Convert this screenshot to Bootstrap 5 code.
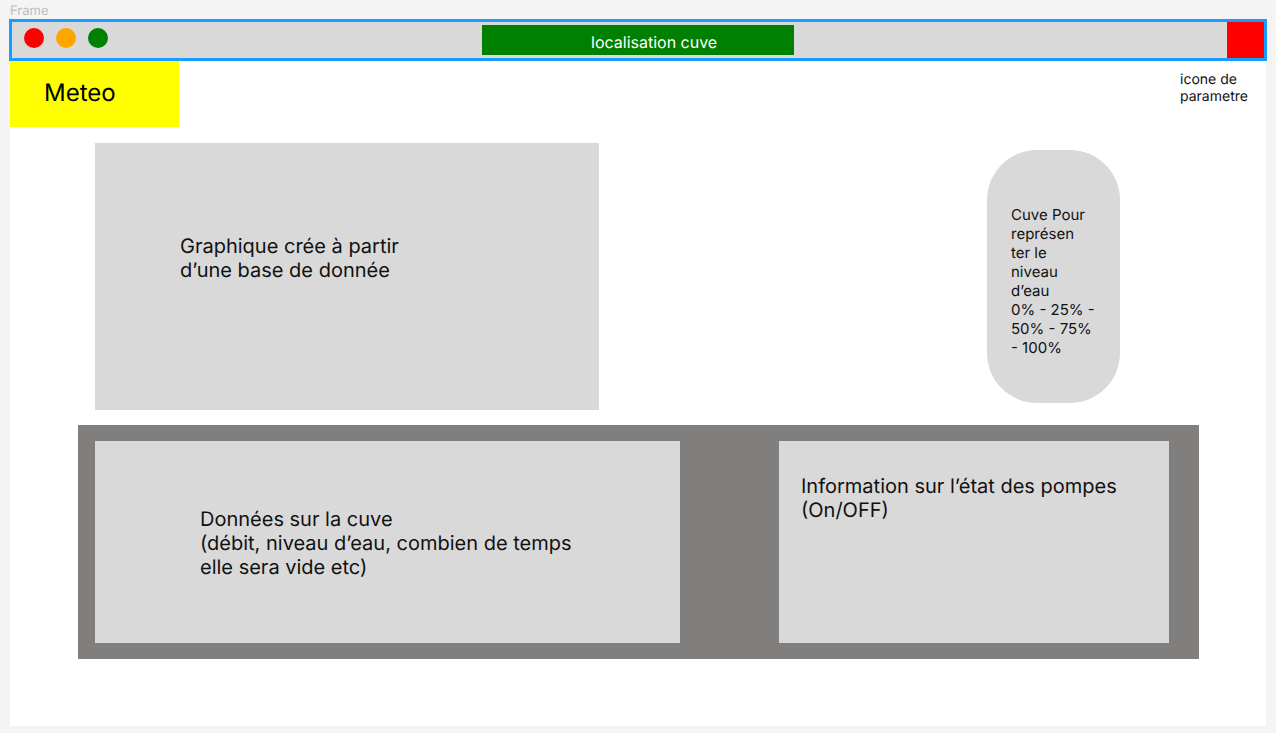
<!DOCTYPE html>
<html lang="fr">
<head>
<meta charset="utf-8">
<meta name="viewport" content="width=device-width, initial-scale=1">
<title>Localisation cuve</title>
<link href="https://cdn.jsdelivr.net/npm/bootstrap@5.3.0/dist/css/bootstrap.min.css" rel="stylesheet">
<style>
  body { font-family: Inter, "Liberation Sans", sans-serif; font-size: 20px; line-height: 24px; color: #111; background: #f4f4f4; text-rendering: geometricPrecision; }
  .board { padding: 3px 9px 7px; }
  .board-name { font-size: 13px; line-height: 16px; color: #bdbdbd; padding-left: 1px; }
  .titlebar { display: grid; grid-template-columns: 470fr 312fr 433fr 37px; height: 42px; background: #d9d9d9; border: 3px solid #189cff; }
  .lights { gap: 12px; padding: 6px 12px; }
  .light { width: 20px; height: 20px; border-radius: 50%; border: 0; padding: 0; }
  .light-close { background: #f00; }
  .light-min { background: orange; }
  .light-max { background: green; }
  .location { background: green; color: #fff; font-size: 16px; line-height: 18px; margin: 3px 0; padding: 8px 0 4px 109px; }
  .settings-block { background: #f00; border: 0; }
  .screen { background: #fff; margin: 0 1px; }
  .weather { background: #ff0; width: 169px; height: 66px; padding: 18px 34px; font-size: 24px; line-height: 28px; font-weight: 400; color: #000; }
  .settings-note { width: 86px; padding-top: 10px; font-size: 14px; line-height: 17px; }
  .charts { display: grid; grid-template-columns: 504fr 388fr 133fr; padding: 16px 146px 15px 85px; }
  .tile { background: #d9d9d9; }
  .chart { height: 267px; padding: 91px 85px; }
  .tank { grid-column: 3; height: 253px; margin-top: 7px; border-radius: 50px; padding: 55px 24px; font-size: 15px; line-height: 19px; }
  .panel { display: grid; grid-template-columns: 585fr 99fr 390fr; background: #817e7e; margin: 0 67px 0 68px; padding: 16px 30px 16px 17px; }
  .figures { height: 202px; padding: 66px 105px; }
  .pumps { grid-column: 3; padding: 33px 22px; }
  .screen-end { height: 67px; }
</style>
</head>
<body>
<div class="board">
  <div class="board-name">Frame</div>
  <header class="titlebar">
    <div class="lights d-flex">
      <button class="light light-close" type="button" aria-label="Fermer"></button>
      <button class="light light-min" type="button" aria-label="Réduire"></button>
      <button class="light light-max" type="button" aria-label="Agrandir"></button>
    </div>
    <div class="location text-nowrap">localisation cuve</div>
    <div></div>
    <button class="settings-block" type="button" aria-label="Paramètres"></button>
  </header>
  <main class="screen">
    <div class="d-flex justify-content-between">
      <h1 class="weather mb-0">Meteo</h1>
      <p class="settings-note mb-0">icone de<br>parametre</p>
    </div>
    <section class="charts">
      <div class="tile chart"><p class="mb-0">Graphique crée à partir<br>d’une base de donnée</p></div>
      <div class="tile tank"><p class="mb-0 text-nowrap">Cuve Pour<br>représen<br>ter le<br>niveau<br>d’eau<br>0% - 25% -<br>50% - 75%<br>- 100%</p></div>
    </section>
    <section class="panel">
      <div class="tile figures"><p class="mb-0 text-nowrap">Données sur la cuve<br>(débit, niveau d’eau, combien de temps<br>elle sera vide etc)</p></div>
      <div class="tile pumps"><p class="mb-0">Information sur l’état des pompes<br>(On/OFF)</p></div>
    </section>
    <div class="screen-end"></div>
  </main>
</div>
<script src="https://cdn.jsdelivr.net/npm/bootstrap@5.3.0/dist/js/bootstrap.bundle.min.js"></script>
</body>
</html>
